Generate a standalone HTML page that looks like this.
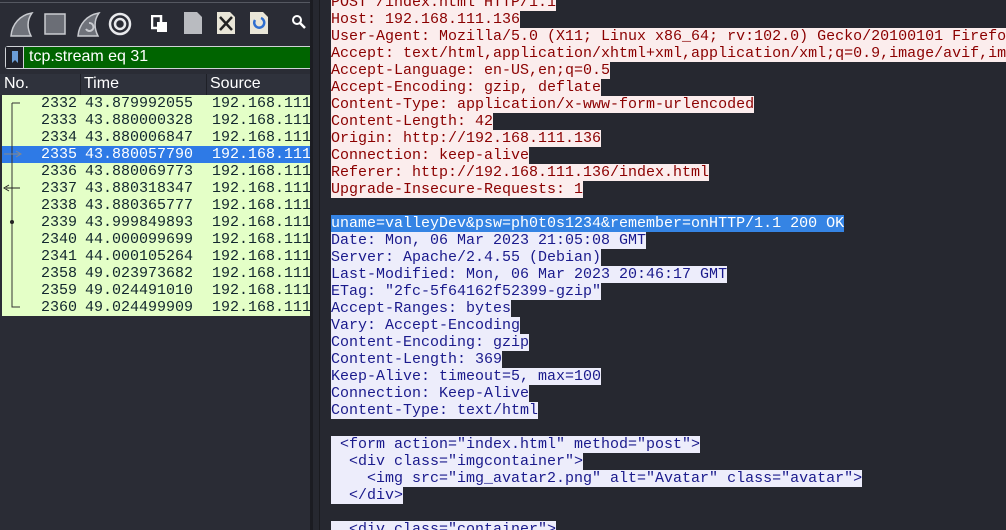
<!DOCTYPE html>
<html style="width:1006px;height:530px;overflow:hidden"><head><meta charset="utf-8"><style>
*{margin:0;padding:0;box-sizing:border-box}
body{width:1006px;height:530px;overflow:hidden;background:#262830;position:relative;font-family:"Liberation Sans",sans-serif}
.left{position:absolute;left:0;top:0;width:310px;height:530px;background:#2a2c35}
.topline{position:absolute;left:0;top:2px;width:310px;height:1px;background:#555861}
.tb{position:absolute;top:12px}
.filter{position:absolute;left:5px;top:46px;width:305px;height:23px;background:#006400;border:1px solid #cfd2d6;border-right:none;border-radius:3px 0 0 3px}
.filter .bm{position:absolute;left:0;top:0;width:18px;height:21px;border-right:1px solid #cfd2d6;background:#1f2129}
.filter .bm i{position:absolute;left:6px;top:4px;width:6px;height:12px;background:#6b9dd6;clip-path:polygon(0 0,100% 0,100% 100%,50% 75%,0 100%)}
.filter span{position:absolute;left:23px;top:1px;color:#fff;font-size:16px}
.hdr{position:absolute;left:0;top:74px;width:310px;height:21px;background:#2f323c;color:#fff;font-size:16px}
.hdr span{position:absolute;top:1px}
.hdr b{position:absolute;top:0;width:1px;height:21px;background:#1e2027}
.rows{position:absolute;left:2px;top:95px;width:308px;height:221px;background:#e4ffc7;overflow:hidden}
.row{position:absolute;left:0;width:308px;height:17px;font-family:"Liberation Mono",monospace;font-size:15px;color:#12272e;white-space:pre;line-height:17px}
.row.sel{background:#2e7ae6;color:#fff}
.row .n{position:absolute;right:233px}
.row .t{position:absolute;left:83px}
.row .s{position:absolute;left:210px}
.div1{position:absolute;left:310px;top:0;width:3px;height:530px;background:#1b1c22}
.div2{position:absolute;left:319px;top:0;width:1px;height:530px;background:#1a1b20}
.txt{position:absolute;left:331px;top:-6px;width:675px;height:536px;overflow:hidden;font-family:"Liberation Mono",monospace;font-size:15px;line-height:17px}
.txt div{height:17px;white-space:nowrap}
.txt span{white-space:pre}
.q span{background:#fbeded;color:#8b0000}
.r span{background:#ededfb;color:#1a1a8c}
.h span{background:#3584e4;color:#fff}
</style></head><body>
<div class="left">
<div class="topline"></div>
<svg class="tb" style="left:8px" width="26" height="26" viewBox="0 0 26 26"><path d="M3 24 C4 12 12 3 24 1 C19 8 19 16 23 24 Z" fill="#6f727a" stroke="#c9cbd0" stroke-width="1.5"/></svg>
<svg class="tb" style="left:43px" width="24" height="24"><rect x="2" y="2" width="20" height="20" fill="#6b6e76" stroke="#c9cbd0" stroke-width="1.5"/></svg>
<svg class="tb" style="left:75px" width="26" height="26" viewBox="0 0 26 26"><path d="M3 24 C4 12 12 3 24 1 C19 8 19 16 23 24 Z" fill="#6f727a" stroke="#c9cbd0" stroke-width="1.5"/><path d="M11 17 a4 4 0 1 0 3 -6" fill="none" stroke="#c9cbd0" stroke-width="2"/></svg>
<svg class="tb" style="left:108px" width="24" height="24"><circle cx="12" cy="12" r="10" fill="none" stroke="#e8e9ec" stroke-width="2.5"/><circle cx="12" cy="12" r="5" fill="none" stroke="#e8e9ec" stroke-width="2.5"/></svg>
<svg class="tb" style="left:151px;top:15px" width="18" height="18"><rect x="1" y="1" width="9" height="12" fill="none" stroke="#fff" stroke-width="2.5"/><rect x="6" y="7" width="10" height="10" fill="#fff"/></svg>
<svg class="tb" style="left:183px;top:11px" width="20" height="24"><path d="M1 1 H14 L19 6 V23 H1 Z" fill="#b9bbc0"/></svg>
<svg class="tb" style="left:216px;top:11px" width="20" height="24"><path d="M1 1 H14 L19 6 V23 H1 Z" fill="#e9e6d8"/><path d="M4 6 L16 19 M16 6 L4 19" stroke="#222" stroke-width="2.5"/></svg>
<svg class="tb" style="left:249px;top:11px" width="20" height="24"><path d="M1 1 H14 L19 6 V23 H1 Z" fill="#e9e6d8"/><path d="M6 9 a5 5 0 1 0 6 -2" fill="none" stroke="#2f6fd0" stroke-width="2.5"/></svg>
<svg class="tb" style="left:291px;top:14px" width="16" height="16"><circle cx="6" cy="6" r="4" fill="none" stroke="#fff" stroke-width="2"/><path d="M9 9 L14 14" stroke="#fff" stroke-width="2.5"/></svg>
<div class="filter"><div class="bm"><i></i></div><span>tcp.stream eq 31</span></div>
<div class="hdr"><span style="left:4px">No.</span><b style="left:80px"></b><span style="left:84px">Time</span><b style="left:206px"></b><span style="left:210px">Source</span></div>
<div class="rows">
<div class="row" style="top:0"><span class="n">2332</span><span class="t">43.879992055</span><span class="s">192.168.111</span></div>
<div class="row" style="top:17px"><span class="n">2333</span><span class="t">43.880000328</span><span class="s">192.168.111</span></div>
<div class="row" style="top:34px"><span class="n">2334</span><span class="t">43.880006847</span><span class="s">192.168.111</span></div>
<div class="row sel" style="top:51px"><span class="n">2335</span><span class="t">43.880057790</span><span class="s">192.168.111</span></div>
<div class="row" style="top:68px"><span class="n">2336</span><span class="t">43.880069773</span><span class="s">192.168.111</span></div>
<div class="row" style="top:85px"><span class="n">2337</span><span class="t">43.880318347</span><span class="s">192.168.111</span></div>
<div class="row" style="top:102px"><span class="n">2338</span><span class="t">43.880365777</span><span class="s">192.168.111</span></div>
<div class="row" style="top:119px"><span class="n">2339</span><span class="t">43.999849893</span><span class="s">192.168.111</span></div>
<div class="row" style="top:136px"><span class="n">2340</span><span class="t">44.000099699</span><span class="s">192.168.111</span></div>
<div class="row" style="top:153px"><span class="n">2341</span><span class="t">44.000105264</span><span class="s">192.168.111</span></div>
<div class="row" style="top:170px"><span class="n">2358</span><span class="t">49.023973682</span><span class="s">192.168.111</span></div>
<div class="row" style="top:187px"><span class="n">2359</span><span class="t">49.024491010</span><span class="s">192.168.111</span></div>
<div class="row" style="top:204px"><span class="n">2360</span><span class="t">49.024499909</span><span class="s">192.168.111</span></div>
<svg style="position:absolute;left:0;top:0" width="30" height="221"><path d="M10 8 H18 M10 8 V212 H18" fill="none" stroke="#333" stroke-width="1"/><path d="M2 59 H18" stroke="#888" stroke-width="1"/><path d="M14 56 L19 59 L14 62" fill="none" stroke="#888"/><path d="M4 93 H18" stroke="#222"/><path d="M7 90 L2 93 L7 96" fill="none" stroke="#222"/><circle cx="10" cy="127" r="2" fill="#222"/></svg>
</div>
</div>
<div class="div1"></div>
<div class="div2"></div>
<div class="txt"><div class="q"><span>POST /index.html HTTP/1.1</span></div><div class="q"><span>Host: 192.168.111.136</span></div><div class="q"><span>User-Agent: Mozilla/5.0 (X11; Linux x86_64; rv:102.0) Gecko/20100101 Firefox/102.0</span></div><div class="q"><span>Accept: text/html,application/xhtml+xml,application/xml;q=0.9,image/avif,image/webp</span></div><div class="q"><span>Accept-Language: en-US,en;q=0.5</span></div><div class="q"><span>Accept-Encoding: gzip, deflate</span></div><div class="q"><span>Content-Type: application/x-www-form-urlencoded</span></div><div class="q"><span>Content-Length: 42</span></div><div class="q"><span>Origin: http://192.168.111.136</span></div><div class="q"><span>Connection: keep-alive</span></div><div class="q"><span>Referer: http://192.168.111.136/index.html</span></div><div class="q"><span>Upgrade-Insecure-Requests: 1</span></div><div></div><div class="h"><span>uname=valleyDev&amp;psw=ph0t0s1234&amp;remember=onHTTP/1.1 200 OK</span></div><div class="r"><span>Date: Mon, 06 Mar 2023 21:05:08 GMT</span></div><div class="r"><span>Server: Apache/2.4.55 (Debian)</span></div><div class="r"><span>Last-Modified: Mon, 06 Mar 2023 20:46:17 GMT</span></div><div class="r"><span>ETag: "2fc-5f64162f52399-gzip"</span></div><div class="r"><span>Accept-Ranges: bytes</span></div><div class="r"><span>Vary: Accept-Encoding</span></div><div class="r"><span>Content-Encoding: gzip</span></div><div class="r"><span>Content-Length: 369</span></div><div class="r"><span>Keep-Alive: timeout=5, max=100</span></div><div class="r"><span>Connection: Keep-Alive</span></div><div class="r"><span>Content-Type: text/html</span></div><div></div><div class="r"><span> &lt;form action="index.html" method="post"&gt;</span></div><div class="r"><span>  &lt;div class="imgcontainer"&gt;</span></div><div class="r"><span>    &lt;img src="img_avatar2.png" alt="Avatar" class="avatar"&gt;</span></div><div class="r"><span>  &lt;/div&gt;</span></div><div></div><div class="r"><span>  &lt;div class="container"&gt;</span></div></div>
</body></html>
